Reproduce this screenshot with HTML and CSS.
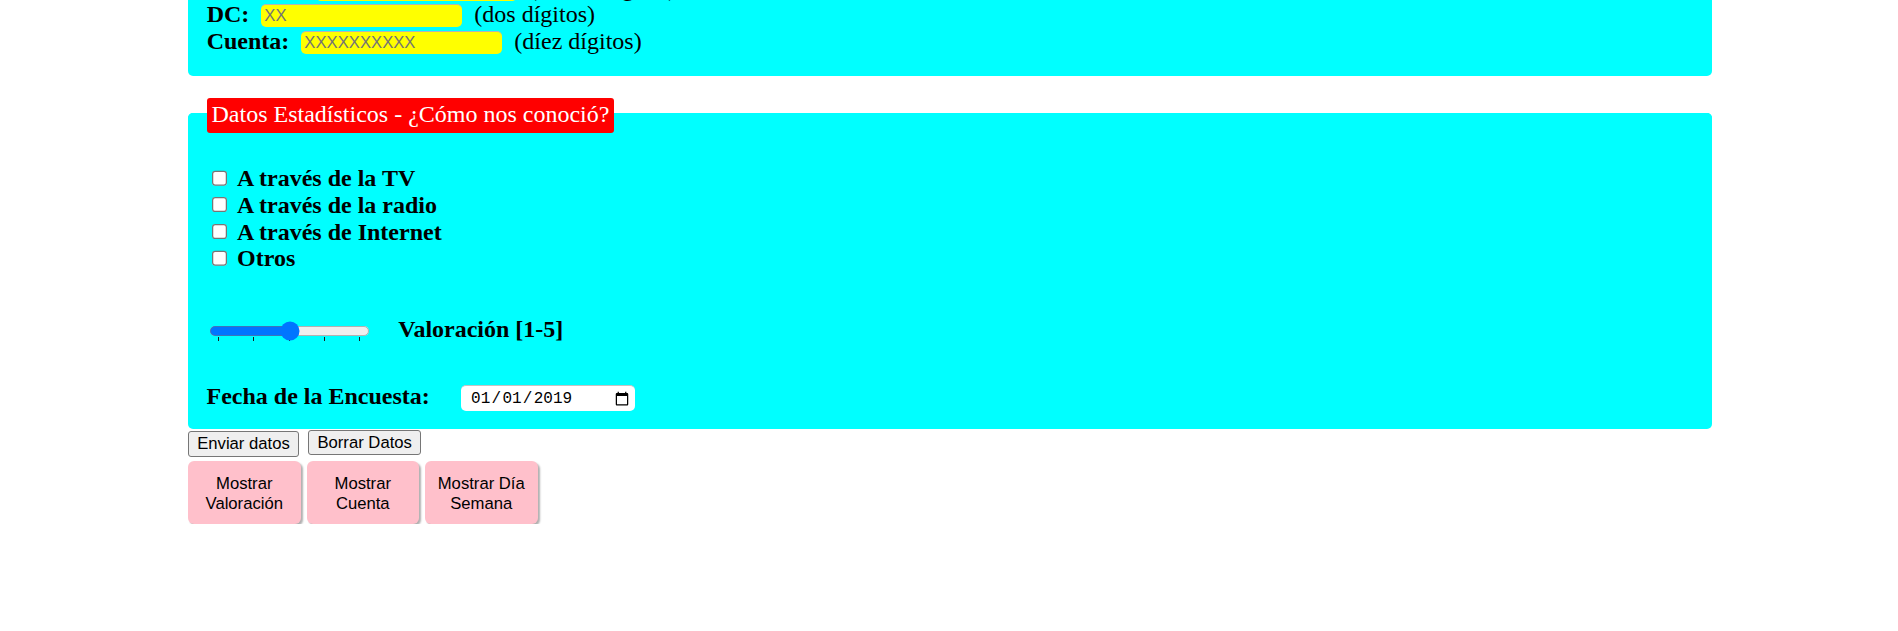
FILE: index.html
```html
<!DOCTYPE html>
<html lang="es">
<head>
<meta charset="utf-8">
<title>Formulario</title>
<link rel="stylesheet" href="styles.css">
</head>
<body>
<form class="page">
  <div class="bank">
    <div class="row"><b class="lbl">Sucursal:</b><input class="field" type="text" placeholder="XXXX"><span class="hint">(cuatro dígitos)</span></div>
    <div class="row"><b class="lbl">DC:</b><input class="field" type="text" placeholder="XX"><span class="hint">(dos dígitos)</span></div>
    <div class="row"><b class="lbl">Cuenta:</b><input class="field" type="text" placeholder="XXXXXXXXXX"><span class="hint">(díez dígitos)</span></div>
  </div>
  <fieldset class="stats">
    <legend class="legend">Datos Estadísticos - ¿Cómo nos conoció?</legend>
    <label class="check"><input type="checkbox" class="box">A través de la TV</label>
    <label class="check"><input type="checkbox" class="box">A través de la radio</label>
    <label class="check"><input type="checkbox" class="box">A través de Internet</label>
    <label class="check"><input type="checkbox" class="box">Otros</label>
    <div class="rate">
      <span class="slider-wrap"><input type="range" class="slider" min="1" max="5" value="3"></span>
      <b class="rate-label">Valoración [1-5]</b>
    </div>
    <div class="date-row">
      <b class="lbl">Fecha de la Encuesta:</b>
      <input type="date" class="date" value="2019-01-01">
    </div>
  </fieldset>
  <div class="actions">
    <input type="submit" class="btn" value="Enviar datos">
    <input type="reset" class="btn btn-reset" value="Borrar Datos">
  </div>
  <div class="shows">
    <button type="button" class="pink">Mostrar Valoración</button>
    <button type="button" class="pink">Mostrar Cuenta</button>
    <button type="button" class="pink">Mostrar Día Semana</button>
  </div>
</form>
</body>
</html>
```
FILE: styles.css
```css
* { box-sizing: border-box; }
html, body { margin: 0; background: #fff; }
body {
  font-family: "Liberation Serif", "Times New Roman", serif;
  font-size: 24px;
  line-height: 26.67px;
  color: #000;
}
.page { width: 1524px; margin-left: 188px; }

.bank {
  background: #0ff;
  border-radius: 5px;
  margin-top: -40px;
  padding: 14.6px 18.7px 21.4px;
}
.row { display: flex; align-items: center; height: 26.67px; }
.lbl { font-weight: bold; }
.field {
  width: 201px;
  height: 23px;
  margin: 2.2px 12px 0;
  padding: 0 3px;
  background: #ff0;
  border: 0;
  border-top: 1px solid #b4b4b4;
  border-radius: 5px;
  font: 16.67px "Liberation Sans", Arial, sans-serif;
  color: #000;
}
.field::placeholder { color: #757575; }

.stats {
  margin: 22px 0 0;
  min-width: 0;
  background: #0ff;
  border: 0;
  border-top: 5px solid #0ff;
  border-radius: 5px;
  padding: 32.3px 0 19px 18.5px;
}
.legend {
  background: #f00;
  color: #fff;
  padding: 3.3px 5px 5px;
  border-radius: 3px;
  line-height: 26.67px;
}
.check {
  display: flex;
  align-items: center;
  height: 26.67px;
  font-weight: bold;
}
.box { zoom: 1.25; margin: 0 7.4px 0 4px; }

.rate {
  display: flex;
  align-items: center;
  height: 26.67px;
  margin-top: 43.8px;
}
.slider-wrap {
  display: flex;
  padding: 3.75px 0 0 2.5px;
  background-image:
    linear-gradient(#1a1a1a, #1a1a1a),
    linear-gradient(#1a1a1a, #1a1a1a),
    linear-gradient(#1a1a1a, #1a1a1a),
    linear-gradient(#1a1a1a, #1a1a1a),
    linear-gradient(#1a1a1a, #1a1a1a);
  background-size: 1.3px 5px;
  background-repeat: no-repeat;
  background-position: 11.6px 20.2px, 46.6px 20.2px, 82.6px 20.2px, 117.6px 20.2px, 152.6px 20.2px;
}
.slider { zoom: 1.25; margin: 0; }
.rate-label { margin-left: 28px; }

.date-row {
  display: flex;
  align-items: center;
  height: 26.67px;
  margin-top: 41px;
}
.date {
  zoom: 1.25;
  margin: 2.7px 0 0 25px;
  width: 139.2px;
  height: 20.8px;
  padding: 0 2px 0 7px;
  background: #fff;
  border: 0;
  border-top: 1px solid #c4c4c4;
  border-radius: 4px;
  font: 12.8px "Liberation Mono", "Courier New", monospace;
  color: #000;
}

.actions { display: flex; align-items: flex-start; margin-top: 2.4px; }
.btn {
  height: 25.6px;
  padding: 0 8.2px;
  background: #efefef;
  border: 1px solid #767676;
  border-radius: 3px;
  font: 16.67px "Liberation Sans", Arial, sans-serif;
  color: #000;
}
.btn-reset { margin: -1.5px 0 0 9.3px; }

.shows { display: flex; gap: 6px; margin-top: 4.4px; }
.pink {
  width: 112.5px;
  height: 62.3px;
  padding: 4px 4px 0;
  background: #ffc0cb;
  border: 0;
  border-radius: 6px;
  box-shadow: 2px 2px 2px #b0b0b0;
  font: 16.67px/20px "Liberation Sans", Arial, sans-serif;
  color: #000;
  text-align: center;
}
```
